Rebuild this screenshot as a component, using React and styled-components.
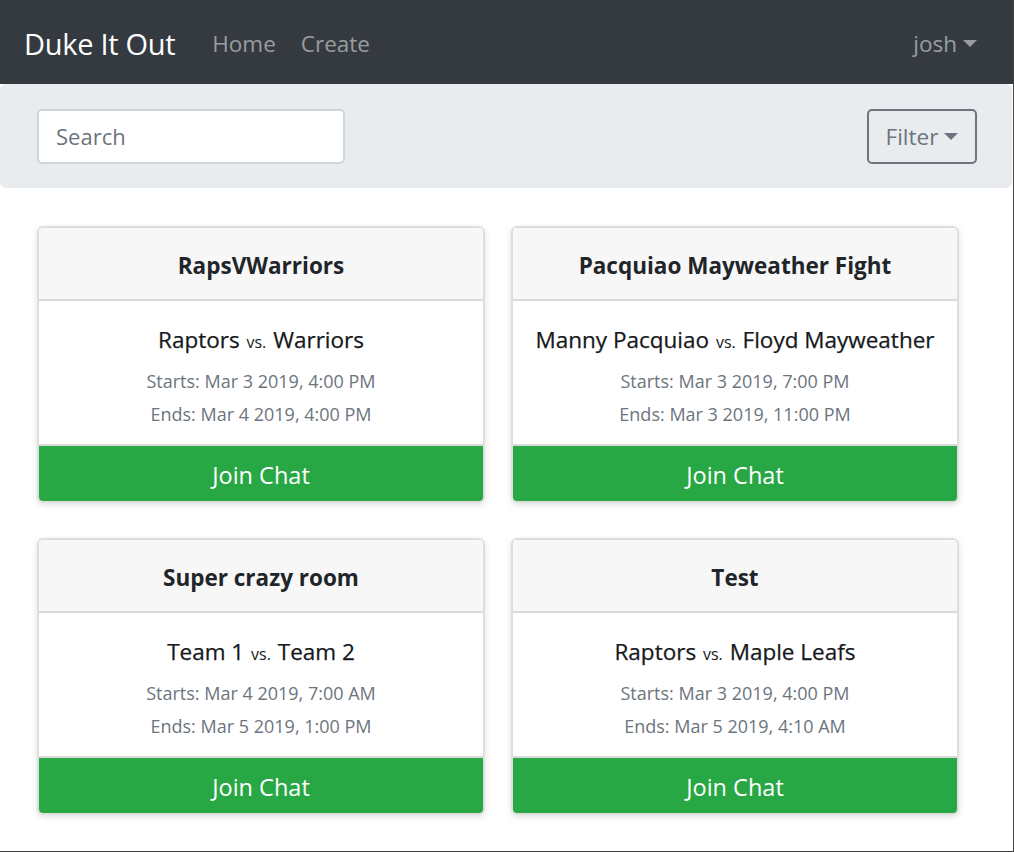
import React from 'react';
import styled, {createGlobalStyle} from 'styled-components';

const GlobalStyle = createGlobalStyle`
    * { box-sizing: border-box; }
    body {
        margin: 0;
        font-family: "Open Sans", "Noto Sans", sans-serif;
        color: #212529;
        background: #fff;
    }
`;

const Page = styled.div`
    width: 1014px;
    height: 852px;
    border-right: 1px solid #444;
    border-bottom: 1px solid #444;
    overflow: hidden;
`;

const NavBar = styled.nav`
    height: 84px;
    background: #343a40;
    display: flex;
    align-items: center;
    padding: 3px 36px 0 24px;
`;

const Brand = styled.a`
    color: #fff;
    font-size: 29px;
    margin-right: 37px;
    letter-spacing: -0.3px;
`;

const NavLink = styled.a`
    color: rgba(255, 255, 255, 0.5);
    font-size: 22.5px;
    margin-right: 25px;
`;

const Spacer = styled.div`
    flex: 1;
`;

const Caret = styled.span`
    display: inline-block;
    margin-left: 6px;
    vertical-align: 4px;
    border-top: 7px solid ${(p) => p.color};
    border-right: 7px solid transparent;
    border-left: 7px solid transparent;
`;

const UserMenu = styled.a`
    color: rgba(255, 255, 255, 0.5);
    font-size: 22.5px;
    display: flex;
    align-items: center;
`;

const SearchBar = styled.div`
    width: 1012px;
    height: 104px;
    background: #e9ecef;
    border-radius: 6px;
    display: flex;
    align-items: center;
    justify-content: space-between;
    padding: 0 35px 0 37px;
`;

const SearchInput = styled.input`
    width: 308px;
    height: 55px;
    border: 2px solid #ced4da;
    border-radius: 5px;
    padding: 0 17px;
    font-family: inherit;
    font-size: 22px;
    color: #495057;
    outline: none;
    &::placeholder { color: #6c757d; }
`;

const FilterButton = styled.button`
    width: 110px;
    height: 55px;
    border: 2px solid #6c757d;
    border-radius: 5px;
    background: transparent;
    color: #6c757d;
    font-family: inherit;
    font-size: 22.5px;
    display: flex;
    align-items: center;
    justify-content: center;
    padding: 0;
`;

const Grid = styled.div`
    display: grid;
    grid-template-columns: 448px 448px;
    column-gap: 26px;
    row-gap: 35px;
    padding: 38px 0 0 37px;
`;

const Card = styled.div`
    height: 277px;
    border: 2px solid #dedede;
    border-radius: 6px;
    box-shadow: 0 2px 6px rgba(0, 0, 0, 0.12);
    display: flex;
    flex-direction: column;
    overflow: hidden;
`;

const CardHeader = styled.div`
    height: 73px;
    flex-shrink: 0;
    padding-top: 4px;
    background: #f7f7f7;
    border-bottom: 2px solid #dadada;
    display: flex;
    align-items: center;
    justify-content: center;
    font-weight: 700;
    font-size: 22.5px;
`;

const CardBody = styled.div`
    flex: 1;
    display: flex;
    flex-direction: column;
    align-items: center;
    padding-top: 24px;
    border-bottom: 2px solid #dadada;
`;

const Teams = styled.div`
    font-size: 22.5px;
    line-height: 30px;
    margin-bottom: 8px;
    color: #16191c;
    -webkit-text-stroke: 0.25px #16191c;
`;

const Vs = styled.small`
    font-size: 16px;
    margin: 0 1px;
    -webkit-text-stroke: 0;
`;

const When = styled.div`
    font-size: 18px;
    line-height: 33px;
    color: #6c757d;
`;

const JoinButton = styled.button`
    height: 57px;
    flex-shrink: 0;
    margin: 0 -2px -2px;
    border: none;
    background: #28a745;
    color: #fff;
    font-family: inherit;
    font-size: 23.5px;
`;

const rooms = [
    {title: 'RapsVWarriors', a: 'Raptors', b: 'Warriors', starts: 'Mar 3 2019, 4:00 PM', ends: 'Mar 4 2019, 4:00 PM'},
    {title: 'Pacquiao Mayweather Fight', a: 'Manny Pacquiao', b: 'Floyd Mayweather', starts: 'Mar 3 2019, 7:00 PM', ends: 'Mar 3 2019, 11:00 PM'},
    {title: 'Super crazy room', a: 'Team 1', b: 'Team 2', starts: 'Mar 4 2019, 7:00 AM', ends: 'Mar 5 2019, 1:00 PM'},
    {title: 'Test', a: 'Raptors', b: 'Maple Leafs', starts: 'Mar 3 2019, 4:00 PM', ends: 'Mar 5 2019, 4:10 AM'},
];

const RoomCard = ({room}) => (
    <Card>
        <CardHeader>{room.title}</CardHeader>
        <CardBody>
            <Teams>{room.a} <Vs>vs.</Vs> {room.b}</Teams>
            <When>Starts: {room.starts}</When>
            <When>Ends: {room.ends}</When>
        </CardBody>
        <JoinButton>Join Chat</JoinButton>
    </Card>
);

export default function App() {
    return (
        <Page>
            <GlobalStyle/>
            <NavBar>
                <Brand>Duke It Out</Brand>
                <NavLink>Home</NavLink>
                <NavLink>Create</NavLink>
                <Spacer/>
                <UserMenu>josh<Caret color="rgba(255,255,255,0.5)"/></UserMenu>
            </NavBar>
            <SearchBar>
                <SearchInput placeholder="Search"/>
                <FilterButton>Filter<Caret color="#6c757d"/></FilterButton>
            </SearchBar>
            <Grid>
                {rooms.map((room) => (
                    <RoomCard key={room.title} room={room}/>
                ))}
            </Grid>
        </Page>
    );
}
